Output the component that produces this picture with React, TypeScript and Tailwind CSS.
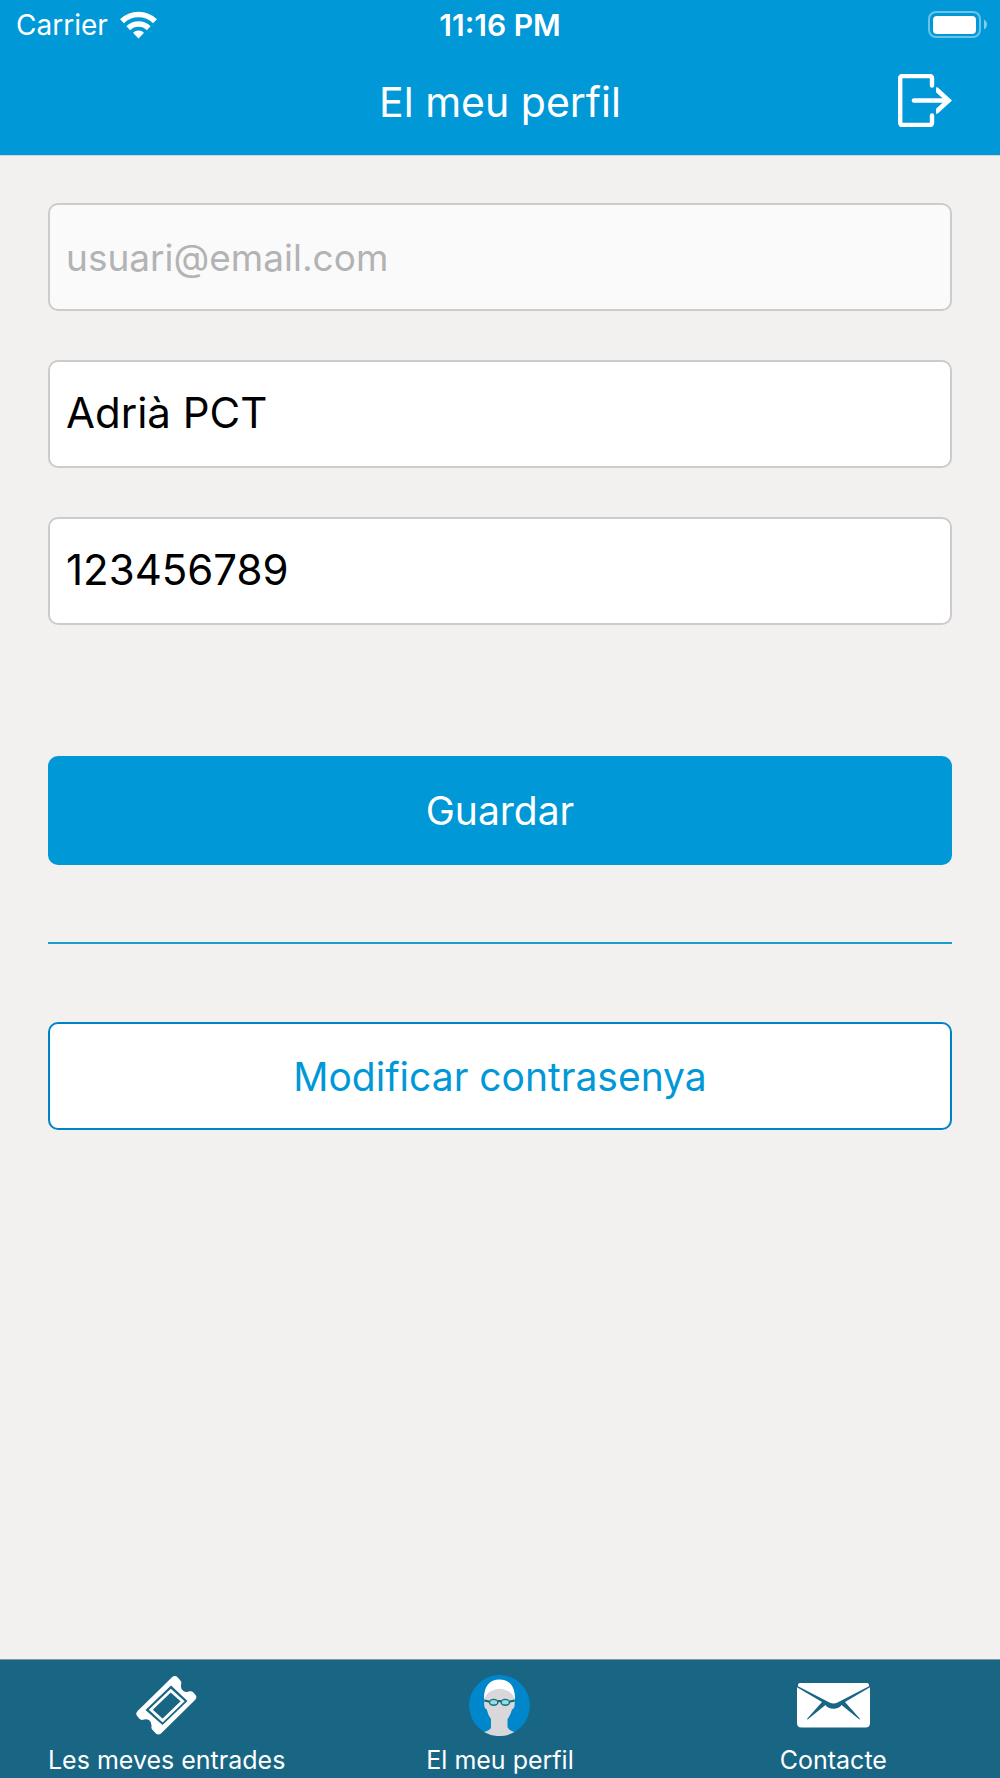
import React from "react";

function WifiIcon() {
  return (
    <svg width="37" height="28" viewBox="0 0 37 28" fill="none" aria-hidden="true">
      <path d="M2 10.300a23.500 23.500 0 0 1 33 0" stroke="#fff" strokeWidth="5.600" />
      <path d="M8.300 17.200a14.600 14.600 0 0 1 20.400 0" stroke="#fff" strokeWidth="5.400" />
      <path d="M18.500 27.500 13 21.800a8 8 0 0 1 11 0z" fill="#fff" />
    </svg>
  );
}

function BatteryIcon() {
  return (
    <svg width="60" height="28" viewBox="0 0 60 28" fill="none" aria-hidden="true">
      <rect x="1" y="1" width="51" height="25" rx="7" stroke="#fff" strokeOpacity="0.42" strokeWidth="2" />
      <rect x="5" y="5" width="43" height="18" rx="4" fill="#fff" />
      <path d="M56 8.500c4 2.500 4 7.500 0 10z" fill="#fff" fillOpacity="0.5" />
    </svg>
  );
}

function LogoutIcon() {
  return (
    <svg width="54" height="53" viewBox="0 0 54 53" fill="none" aria-hidden="true">
      <path d="M34 11.500V4a2 2 0 0 0-2-2H4.200a2 2 0 0 0-2 2v45a2 2 0 0 0 2 2H32a2 2 0 0 0 2-2v-7.500" stroke="#fff" strokeWidth="4.400" strokeLinecap="round" />
      <path d="M16 26.500h32" stroke="#fff" strokeWidth="4.600" strokeLinecap="round" />
      <path d="M38 13.500v4.700l9 8.300-9 8.300v4.700q1.200.6 2.600-.7L54 26.500 40.600 14.200q-1.400-1.300-2.600-.7z" fill="#fff" />
    </svg>
  );
}

function TicketIcon() {
  return (
    <svg width="61" height="59" viewBox="0 0 61 59" fill="none" aria-hidden="true">
      <path
        d="M36 1.300q3-2.500 5.800.3l2.400 2.600q1.800 2 .8 4.500-.6 4.500 2.400 6.300 3 1.800 6 .3 2.200-.6 4 1.200l2.400 2.800q1.500 2.300-.8 4.600L25 57.500q-2.700 2.200-5.400-.2l-3-3.200q-1.800-2-1-4.300 0-4-2.600-5.800-3-1.500-6-.2-2.200.6-3.800-1.200l-2.200-2.800q-1.800-2.300.6-4.800z"
        fill="#fff"
      />
      <path d="M35 9.500 51.500 25 26.500 49 9.500 34z" fill="#186584" />
      <path d="M34.800 14.600 46.600 25.200 26.600 44.600 14.800 33.700z" stroke="#fff" strokeWidth="2.800" />
    </svg>
  );
}

function SwimmerIcon() {
  return (
    <svg width="61" height="61" viewBox="0 0 61 61" fill="none" aria-hidden="true">
      <circle cx="30.500" cy="30.500" r="30.500" fill="#0086cb" />
      <path d="M15.500 23C17 8 44 8 45.700 23v5.500q0 5-2.700 6-1.500 6-4.500 9.500v8q.5 3 7 5a30.500 30.500 0 0 1-30.500 0q7-2 7-5v-8q-3-3.500-4.200-9.500-2.700-1-2.700-6z" fill="#d8d7d9" />
      <path d="M15 25C14.500 12 20 4.500 30.500 4.500S46.500 12 46 25q-2-6-6.500-8.700-9-5-18 0Q17 19 15 25z" fill="#fff" />
      <path d="M15.300 25.500 21 26.800M40 26.800l5.700-1.300M28 26.500q2.500-1 5 0" stroke="#11696f" strokeWidth="2" />
      <ellipse cx="24.700" cy="27.300" rx="4.200" ry="2.900" fill="#92dce5" stroke="#176f80" strokeWidth="1.400" />
      <ellipse cx="36.300" cy="27.300" rx="4.200" ry="2.900" fill="#92dce5" stroke="#176f80" strokeWidth="1.400" />
    </svg>
  );
}

function EnvelopeIcon() {
  return (
    <svg width="73" height="45" viewBox="0 0 73 45" fill="none" aria-hidden="true">
      <path d="M1 2q0-2 2-2h67q2 0 2 2v1.200L40.500 19.600q-4 1.800-8 0L1 3.200z" fill="#fff" />
      <path d="M0 4.300 25 19 10.300 35.500v1.300L28.500 22q2.500 3.800 8 3.800t8-3.800l18.200 14.800v-1.300L48 19 73 4.300V40q0 4.500-4.500 4.500h-64Q0 44.500 0 40z" fill="#fff" />
    </svg>
  );
}

type FieldProps = { label: string; type: string; value: string; disabled?: boolean };

function Field({ label, type, value, disabled }: FieldProps) {
  return (
    <input
      type={type}
      aria-label={label}
      defaultValue={value}
      disabled={disabled}
      className="h-[108px] w-full rounded-[10px] border-2 border-[#cccccc] bg-white px-4 pb-1 text-[42px] text-black disabled:bg-[#fafafa] disabled:pb-0 disabled:text-[37px] disabled:text-[#b3b3b3]"
    />
  );
}

const tabs = [
  { label: "Les meves entrades", Icon: TicketIcon },
  { label: "El meu perfil", Icon: SwimmerIcon },
  { label: "Contacte", Icon: EnvelopeIcon },
];

export default function App() {
  return (
    <div className="flex min-h-screen flex-col bg-[#f2f1ef] font-['Inter',sans-serif]">
      <header className="border-b border-[#d5d5d5] bg-[#0098d7] text-white">
        <div className="grid h-[50px] grid-cols-[1fr_auto_1fr] items-center px-3">
          <div className="flex items-center gap-3 pl-1">
            <span className="text-[28px]">Carrier</span>
            <WifiIcon />
          </div>
          <span className="text-[30px] font-semibold">11:16 PM</span>
          <div className="flex justify-end">
            <BatteryIcon />
          </div>
        </div>
        <div className="grid h-[105px] grid-cols-[1fr_auto_1fr] items-center px-12 pb-1">
          <span />
          <h1 className="pt-1 text-[41px]">El meu perfil</h1>
          <button type="button" aria-label="Tancar sessió" className="justify-self-end">
            <LogoutIcon />
          </button>
        </div>
      </header>

      <main className="flex grow flex-col px-12 pt-[47px]">
        <form className="flex flex-col gap-[49px]" onSubmit={(e) => e.preventDefault()}>
          <Field label="Correu electrònic" type="email" value="usuari@email.com" disabled />
          <Field label="Nom" type="text" value="Adrià PCT" />
          <Field label="Telèfon" type="tel" value="123456789" />
          <button type="submit" className="mt-[82px] h-[109px] rounded-[10px] bg-[#0098d7] pt-0.5 text-[39px] text-white">
            Guardar
          </button>
        </form>
        <hr className="mt-[77px] mb-[78px] border-t-2 border-[#1b9fd0]" />
        <button type="button" className="h-[108px] rounded-[10px] border-2 border-[#0083c6] bg-white pt-0.5 text-[39px] text-[#0098d7]">
          Modificar contrasenya
        </button>
      </main>

      <nav className="grid h-[119px] grid-cols-3 border-t border-[#88969c] bg-[#186584] text-white">
        {tabs.map(({ label, Icon }) => (
          <a key={label} href="#" className="flex flex-col items-center pt-[14px]">
            <span className="flex h-[62px] items-center">
              <Icon />
            </span>
            <span className="mt-2 text-[25px] leading-8">{label}</span>
          </a>
        ))}
      </nav>
    </div>
  );
}
